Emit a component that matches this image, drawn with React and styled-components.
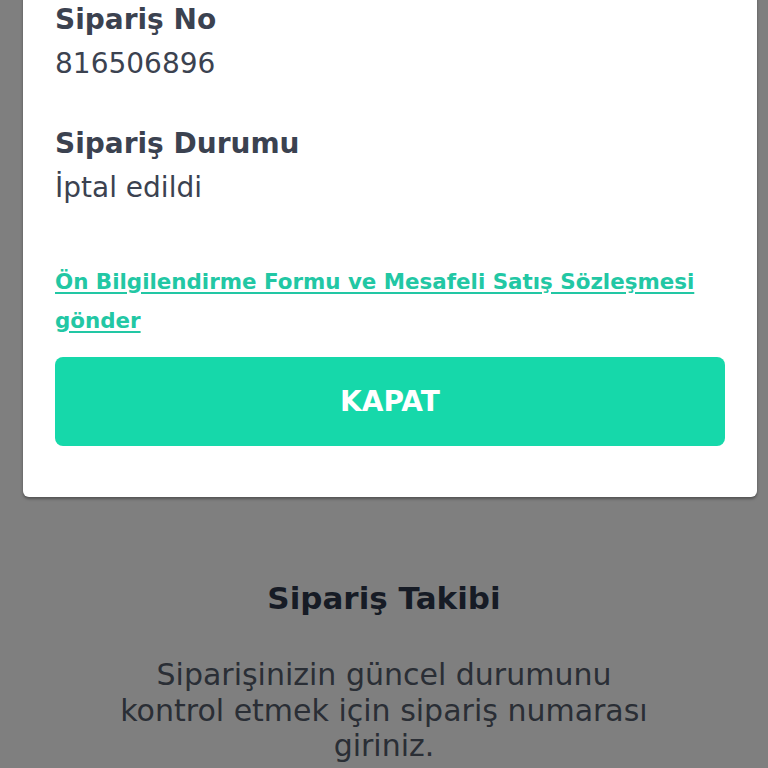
import React from "react";
import styled, { createGlobalStyle } from "styled-components";

const GlobalStyle = createGlobalStyle`
    html, body {
        margin: 0;
        padding: 0;
        background: #7f7f7f;
        font-family: "DejaVu Sans", "Open Sans", sans-serif;
        overflow: hidden;
    }
`;

const App = () => {
    return (
        <>
            <GlobalStyle />
            <Page>
                <Modal>
                    <InfoBlock>
                        <Label>Sipariş No</Label>
                        <Value>816506896</Value>
                    </InfoBlock>
                    <InfoBlock>
                        <Label>Sipariş Durumu</Label>
                        <Value>İptal edildi</Value>
                    </InfoBlock>
                    <DocLink href="#">
                        Ön Bilgilendirme Formu ve Mesafeli Satış Sözleşmesi gönder
                    </DocLink>
                    <CloseBtn>KAPAT</CloseBtn>
                </Modal>

                <TrackSection>
                    <TrackTitle>Sipariş Takibi</TrackTitle>
                    <TrackText>
                        Siparişinizin güncel durumunu
                        <br />
                        kontrol etmek için sipariş numarası
                        <br />
                        giriniz.
                    </TrackText>
                </TrackSection>
            </Page>
        </>
    );
};

const Page = styled.div`
    width: 768px;
    height: 768px;
    display: flex;
    flex-direction: column;
`;

const Modal = styled.div`
    box-sizing: border-box;
    width: 734px;
    margin: -40px 0 0 23px;
    padding: 38px 32px 51px;
    background: #ffffff;
    border-radius: 6px;
    box-shadow: 0 2px 3px rgba(0, 0, 0, 0.35);
    display: flex;
    flex-direction: column;
`;

const InfoBlock = styled.div`
    display: flex;
    flex-direction: column;
    margin-bottom: 36px;
`;

const Label = styled.div`
    font-size: 28px;
    font-weight: 700;
    line-height: 44px;
    color: #3b4250;
`;

const Value = styled.div`
    font-size: 28px;
    font-weight: 400;
    line-height: 44px;
    color: #3b4250;
`;

const DocLink = styled.a`
    margin-top: 15.5px;
    font-size: 21.4px;
    font-weight: 600;
    line-height: 39px;
    color: #22c7a4;
    text-decoration: underline;
    text-underline-offset: 3px;
`;

const CloseBtn = styled.button`
    margin-top: 17.5px;
    height: 89px;
    border: none;
    border-radius: 8px;
    background: #16d8aa;
    color: #ffffff;
    font-family: "DejaVu Sans", "Open Sans", sans-serif;
    font-size: 28px;
    font-weight: 700;
    cursor: pointer;
`;

const TrackSection = styled.div`
    margin-top: 79px;
    display: flex;
    flex-direction: column;
    align-items: center;
    text-align: center;
`;

const TrackTitle = styled.div`
    font-size: 31px;
    font-weight: 600;
    line-height: 44px;
    color: #161b25;
`;

const TrackText = styled.div`
    margin-top: 37px;
    font-size: 30px;
    line-height: 35.5px;
    color: #2a2e35;
`;

export default App;
